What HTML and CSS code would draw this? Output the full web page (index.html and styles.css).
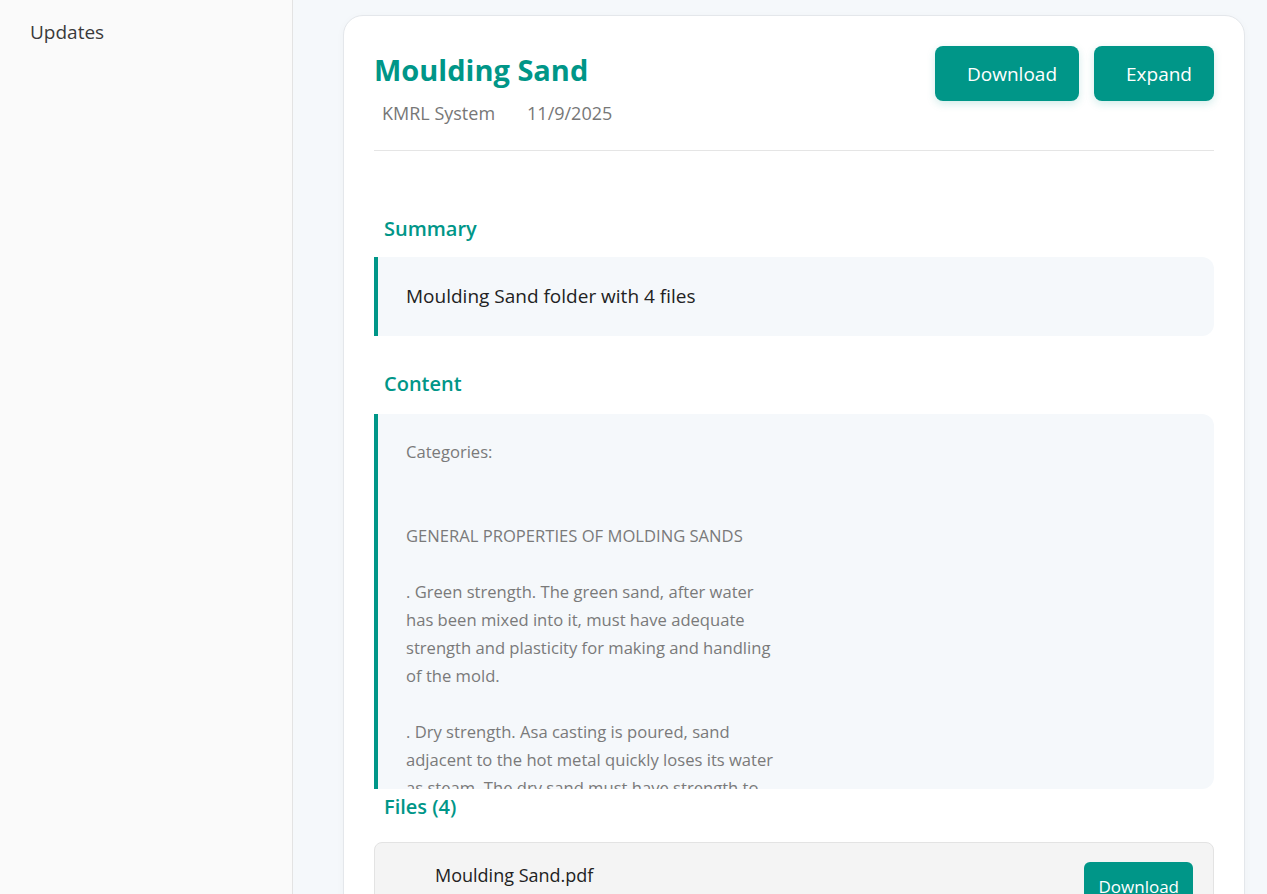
FILE: index.html
```html
<!DOCTYPE html>
<html lang="en">
<head>
<meta charset="utf-8">
<title>Moulding Sand</title>
<link rel="stylesheet" href="styles.css">
</head>
<body>
<div class="app">
  <aside class="sidebar">
    <div class="nav-item">Updates</div>
  </aside>
  <main class="main">
    <section class="card">
      <header class="doc-header">
        <div class="doc-title-block">
          <h1 class="doc-title">Moulding Sand</h1>
          <div class="doc-meta">
            <span class="meta-author">KMRL System</span>
            <span class="meta-date">11/9/2025</span>
          </div>
        </div>
        <div class="doc-actions">
          <button class="btn btn-lg">Download</button>
          <button class="btn btn-lg">Expand</button>
        </div>
      </header>

      <h2 class="section-title section-first">Summary</h2>
      <div class="panel summary">Moulding Sand folder with 4 files</div>

      <h2 class="section-title section-content">Content</h2>
      <div class="panel content"><div class="content-text">Categories:


GENERAL PROPERTIES OF MOLDING SANDS

. Green strength. The green sand, after water
has been mixed into it, must have adequate
strength and plasticity for making and handling
of the mold.

. Dry strength. Asa casting is poured, sand
adjacent to the hot metal quickly loses its water
as steam. The dry sand must have strength to
resist erosion, and also the metallostatic
pressure of the molten metal.</div></div>

      <h2 class="section-title section-files">Files (4)</h2>
      <div class="file-item">
        <span class="file-name">Moulding Sand.pdf</span>
        <button class="btn btn-sm">Download</button>
      </div>
    </section>
  </main>
</div>
</body>
</html>
```

FILE: styles.css
```css
* { box-sizing: border-box; }
html, body { margin: 0; padding: 0; height: 100%; overflow: hidden; }
body {
  font-family: "Open Sans", "Noto Sans", sans-serif;
  color: #333;
}
.app {
  display: flex;
  height: 894px;
}
.sidebar {
  width: 293px;
  flex: none;
  background: #fafafa;
  border-right: 1px solid #e3e3e3;
  padding: 18px 30px;
}
.nav-item {
  font-size: 19px;
  line-height: 28px;
  color: #3a3a3a;
}
.main {
  flex: 1;
  background: #f5f8fb;
  padding: 15px 22px 0 50px;
  overflow: hidden;
}
.card {
  background: #fff;
  border: 1px solid #e4e7eb;
  border-radius: 20px;
  padding: 30px 30px 40px 30px;
  min-height: 1000px;
  box-shadow: 0 2px 8px rgba(0,0,0,0.03);
}
.doc-header {
  display: flex;
  justify-content: space-between;
  align-items: flex-start;
  border-bottom: 1px solid #e5e5e5;
  padding-bottom: 24px;
}
.doc-title {
  margin: 5px 0 0 0;
  font-size: 29px;
  line-height: 38px;
  font-weight: 700;
  color: #009688;
}
.doc-meta {
  margin-top: 11px;
  padding-left: 8px;
  font-size: 18px;
  line-height: 26px;
  color: #777;
  display: flex;
  gap: 32px;
}
.doc-actions {
  display: flex;
  gap: 15px;
}
.btn {
  font-family: inherit;
  background: #009688;
  color: #fff;
  border: none;
  cursor: pointer;
}
.btn-lg {
  height: 55px;
  font-size: 19px;
  border-radius: 8px;
  padding: 0 22px 0 32px;
  box-shadow: 0 3px 8px rgba(0,150,136,0.18);
}
.btn-sm {
  height: 48px;
  font-size: 17px;
  border-radius: 6px;
  padding: 0 14px;
}
.section-title {
  margin: 34px 0 14px 10px;
  font-size: 20px;
  line-height: 28px;
  font-weight: 600;
  color: #009688;
}
.section-first { margin-top: 64px; }
.section-content { margin-bottom: 16px; }
.section-files { margin-top: 4px; margin-bottom: 21px; }
.panel {
  background: #f5f8fb;
  border-left: 4px solid #009688;
  border-radius: 0 12px 12px 0;
}
.summary {
  padding: 24px 28px;
  font-size: 19px;
  line-height: 31px;
  color: #222;
}
.content {
  height: 375px;
  overflow: hidden;
  padding: 24px 28px;
}
.content-text {
  white-space: pre-line;
  font-size: 16.6px;
  line-height: 28px;
  color: #7a7a7a;
}
.file-item {
  display: flex;
  justify-content: space-between;
  align-items: flex-start;
  background: #f4f4f4;
  border: 1px solid #e3e3e3;
  border-radius: 8px;
  padding: 19px 20px 20px 60px;
}
.file-name {
  font-size: 18px;
  line-height: 26px;
  color: #222;
}
```
